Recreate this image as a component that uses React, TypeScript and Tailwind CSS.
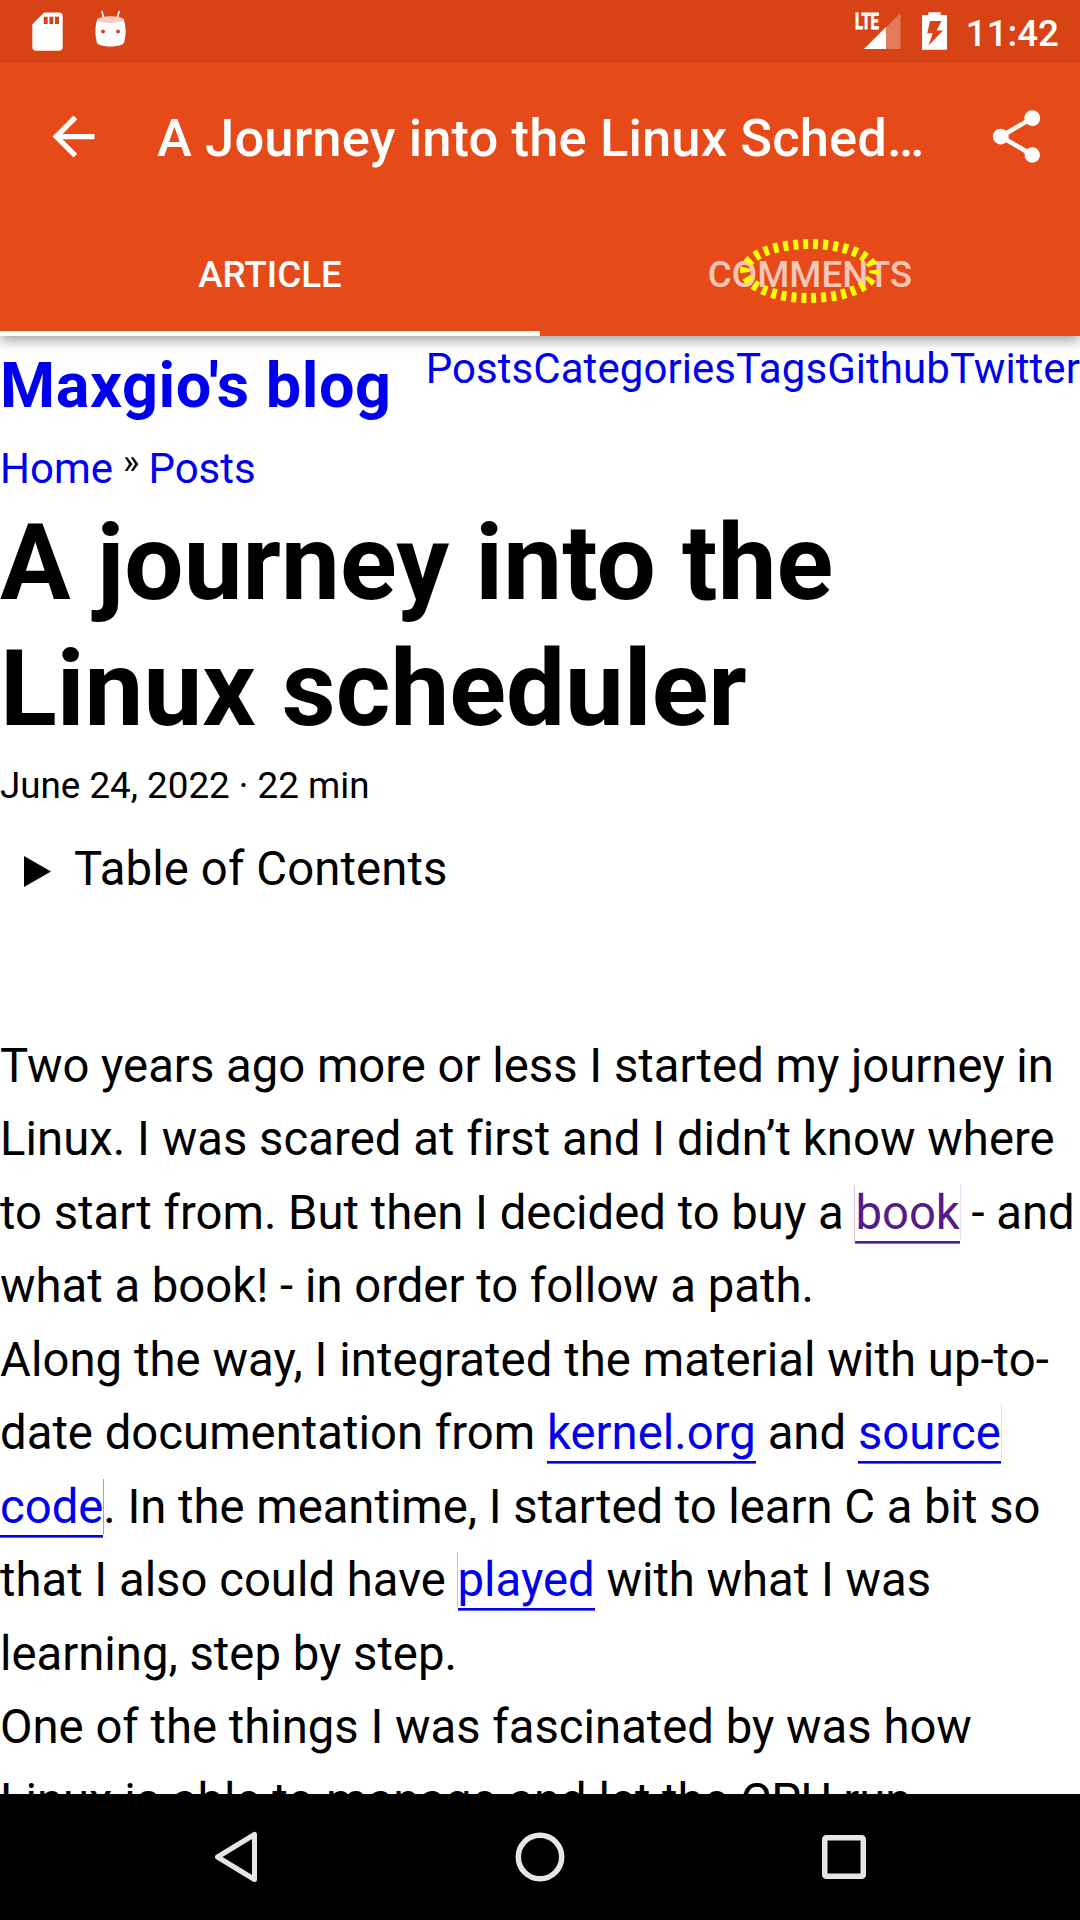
import type { ReactNode } from "react";

function StatusBar() {
  return (
    <div className="flex h-[63px] items-center bg-[#d84315] text-white">
      <svg className="ml-8 h-[63px] w-[31px]" viewBox="0 0 31 63" fill="currentColor">
        <path
          fillRule="evenodd"
          d="M12 12.500H27a3.700 3.700 0 0 1 3.700 3.700V47a3.700 3.700 0 0 1-3.700 3.700H4A3.700 3.700 0 0 1 .3 47V24.300ZM11.700 16.700V24h4v-7.300Zm5.700 0V24h4v-7.300Zm5.600 0V24h4v-7.300Z"
        />
      </svg>
      <svg className="ml-8 h-[63px] w-[31px]" viewBox="0 0 31 63" fill="currentColor">
        <path d="M7 11.500 8.500 18M24 11.500 22.500 18" stroke="currentColor" strokeWidth="1.600" strokeLinecap="round" />
        <path
          fillRule="evenodd"
          d="M2.500 18.500C7 22.600 24 22.600 28.500 18.500 31 26 31.500 35 28.800 43.300 25 47.600 6 47.600 2.200 43.300 -.5 35 0 26 2.500 18.500ZM8 29.500a2 2 0 1 0 0 4 2 2 0 0 0 0-4Zm15 0a2 2 0 1 0 0 4 2 2 0 0 0 0-4Z"
        />
        <ellipse cx="15.500" cy="19.600" rx="13" ry="3.400" fill="#f5cdc1" />
      </svg>
      <svg className="ml-auto h-[63px] w-[46px]" viewBox="0 0 46 63" fill="currentColor">
        <text
          x="0"
          y="29"
          fontSize="21.500"
          fontWeight="700"
          fontFamily="Roboto, sans-serif"
          stroke="currentColor"
          strokeWidth=".8"
          textLength="24"
          lengthAdjust="spacingAndGlyphs"
        >
          LTE
        </text>
        <path d="M45.500 13V49H31V27.500Z" opacity=".3" />
        <path d="M31 27V49H9Z" />
      </svg>
      <svg className="ml-[21px] h-[63px] w-[25px]" viewBox="0 0 25 63" fill="currentColor">
        <path fillRule="evenodd" d="M6.300 12.300h12.400v2.700H25v34.700H0V15h6.300ZM8 21 5.300 33.300h5.500L6.500 45.500 21 30.500h-6.500L19.500 21Z" />
      </svg>
      <span className="mt-[3px] mr-[21px] ml-[19px] text-[36.750px] leading-[43px] font-medium">11:42</span>
    </div>
  );
}

function Toolbar() {
  return (
    <div className="flex h-[147px] items-center text-white">
      <svg className="ml-[42px] h-[63px] w-[63px]" viewBox="0 0 24 24" fill="currentColor">
        <path d="M20 11H7.830l5.590-5.590L12 4l-8 8 8 8 1.410-1.410L7.830 13H20v-2z" />
      </svg>
      <h1 className="mt-[3px] ml-[52px] text-[52.500px] leading-[62px] font-medium tracking-[0.13px] whitespace-nowrap">
        A Journey into the Linux Sched…
      </h1>
      <svg className="mr-8 ml-auto h-[63px] w-[63px]" viewBox="0 0 24 24" fill="currentColor">
        <path d="M18 16.080c-.76 0-1.440.3-1.960.77L8.910 12.700c.05-.23.09-.46.09-.7s-.04-.47-.09-.7l7.050-4.110c.54.5 1.250.81 2.040.81 1.660 0 3-1.340 3-3s-1.340-3-3-3-3 1.340-3 3c0 .24.04.47.09.7L8.040 9.810C7.500 9.310 6.790 9 6 9c-1.660 0-3 1.340-3 3s1.340 3 3 3c.79 0 1.500-.31 2.040-.81l7.120 4.160c-.05.21-.08.43-.08.65 0 1.610 1.310 2.920 2.920 2.920s2.920-1.310 2.920-2.920-1.310-2.920-2.920-2.920z" />
      </svg>
    </div>
  );
}

function Tabs() {
  return (
    <div className="grid h-[126px] grid-cols-2 text-[36.750px] leading-[43px] font-medium text-white">
      <div className="flex items-center justify-center border-b-[5px] border-white pt-[7px]">ARTICLE</div>
      <div className="relative flex items-center justify-center pt-[2px]">
        <span className="text-white/70">COMMENTS</span>
        <svg className="absolute top-[25px] left-[196px] h-[72px] w-[148px]" viewBox="0 0 148 72" fill="none">
          <ellipse cx="73.500" cy="36" rx="64.500" ry="27" stroke="#ff0" strokeWidth="10" strokeDasharray="5 5" strokeDashoffset="2" />
        </svg>
      </div>
    </div>
  );
}

function Line({ children, className }: { children: ReactNode; className?: string }) {
  return <span className={`block whitespace-nowrap ${className ?? ""}`}>{children}</span>;
}

function Link({ children, className }: { children: ReactNode; className?: string }) {
  return (
    <a className={className ?? "text-[#0000ee] shadow-[0_2.625px_0_#0000ee]"}>
      {children}
    </a>
  );
}

export default function App() {
  return (
    <div className="flex h-[1920px] w-[1080px] flex-col overflow-hidden bg-white font-[Roboto,sans-serif] text-black">
      <header className="relative z-10 shrink-0 bg-[#e64a19] shadow-[0_5px_11px_rgba(0,0,0,0.35)]">
        <StatusBar />
        <Toolbar />
        <Tabs />
      </header>

      <main className="min-h-0 flex-1 overflow-hidden">
        <div className="flex h-[102px] justify-between text-[#0000ee]">
          <a className="mt-[13px] text-[63px] leading-[74px] font-bold tracking-[0.55px] whitespace-nowrap">Maxgio's blog</a>
          <nav className="mt-[8px] flex text-[42px] leading-[49px] tracking-[0.06px]">
            <a>Posts</a>
            <a>Categories</a>
            <a>Tags</a>
            <a>Github</a>
            <a>Twitter</a>
          </nav>
        </div>

        <div className="mt-[6px] flex h-[49px] text-[42px] leading-[49px]">
          <a className="text-[#0000ee]">Home</a>
          <span className="mr-[9px] ml-[10px] text-[35px] leading-[38px]">»</span>
          <a className="text-[#0000ee]">Posts</a>
        </div>

        <h1 className="mt-[8px] text-[105px] leading-[126px] font-bold">
          <Line className="tracking-[0.1px]">A journey into the</Line>
          <Line>Linux scheduler</Line>
        </h1>

        <div className="mt-[11px] text-[36.750px] leading-[43px]">June 24, 2022 · 22 min</div>

        <div className="mt-[35px] flex h-[55px] items-center text-[47.250px] leading-[55px]">
          <svg className="mt-[4px] ml-6 h-[31px] w-[27px]" viewBox="0 0 27 31">
            <path d="M0 0 27 15.500 0 31Z" />
          </svg>
          <span className="ml-[23px] tracking-[0.13px]">Table of Contents</span>
        </div>

        <p className="mt-[132.500px] text-[47.250px] leading-[73.500px] [font-variant-ligatures:none]">
          <Line>Two years ago more or less I started my journey in</Line>
          <Line className="tracking-[0.04px]">Linux. I was scared at first and I didn’t know where</Line>
          <Line>
            to start from. But then I decided to buy a{" "}
            <Link className="text-[#551a8b] shadow-[0_2.625px_0_#551a8b,-1px_0_0_#d4c5e2,1px_0_0_#e4dcf2]">book</Link> - and
          </Line>
          <Line>what a book! - in order to follow a path.</Line>
          <Line className="tracking-[0.06px]">Along the way, I integrated the material with up-to-</Line>
          <Line className="tracking-[0.02px]">
            date documentation from <Link>kernel.org</Link> and{" "}
            <Link className="text-[#0000ee] shadow-[0_2.625px_0_#0000ee,1px_0_0_#dedefc]">source</Link>
          </Line>
          <Line className="tracking-[-0.02px]">
            <Link className="text-[#0000ee] shadow-[0_2.625px_0_#0000ee,1px_0_0_#9999f8]">code</Link>. In the meantime, I started to learn C a bit so
          </Line>
          <Line>
            that I also could have{" "}
            <Link className="text-[#0000ee] shadow-[0_2.625px_0_#0000ee,-1px_0_0_#bbbbfa]">played</Link> with what I was
          </Line>
          <Line>learning, step by step.</Line>
          <Line>One of the things I was fascinated by was how</Line>
          <Line>Linux is able to manage and let the CPU run</Line>
        </p>
      </main>

      <footer className="grid h-[126px] shrink-0 grid-cols-[258px_564px_258px] items-center bg-black text-[#e6e6e6]">
        <svg className="h-[52px] w-[46px] justify-self-end" viewBox="0 0 46 52" fill="none" stroke="currentColor" strokeWidth="5" strokeLinejoin="round">
          <path d="M42.500 3.500V48.500L5.500 26Z" />
        </svg>
        <svg className="h-[52px] w-[52px] justify-self-center" viewBox="0 0 52 52" fill="none" stroke="currentColor" strokeWidth="5.500">
          <circle cx="26" cy="26" r="21.700" />
        </svg>
        <svg className="h-[44px] w-[44px] justify-self-start" viewBox="0 0 44 44" fill="none" stroke="currentColor" strokeWidth="5.500">
          <rect x="2.750" y="2.750" width="38.500" height="38.500" rx="1.500" />
        </svg>
      </footer>
    </div>
  );
}
